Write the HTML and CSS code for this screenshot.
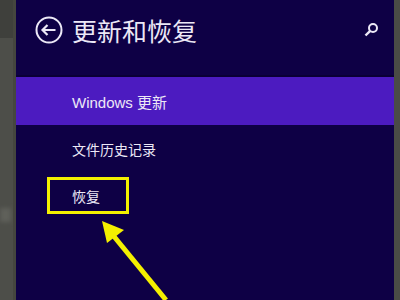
FILE: index.html
```html
<!DOCTYPE html>
<html lang="zh-CN">
<head>
    <meta charset="UTF-8">
    <title>更新和恢复</title>
    <link rel="stylesheet" href="styles.css">
</head>
<body>
    <!-- Franja izquierda (fondo de la ventana de atrás) -->
    <div class="side side-left">
        <div class="side-top"></div>
        <div class="side-ghost"></div>
    </div>

    <!-- Panel de configuración -->
    <div class="panel">
        <div class="panel-header">
            <div class="header-title">
                <svg class="back-icon" width="28" height="28" viewBox="0 0 28 28">
                    <circle cx="14" cy="14" r="12.5" fill="none" stroke="#ece8f6" stroke-width="2"/>
                    <path d="M7.5 14 H20.5 M12.5 9 L7.5 14 L12.5 19" fill="none" stroke="#ece8f6" stroke-width="2.2"/>
                </svg>
                <span class="title">更新和恢复</span>
            </div>
            <svg class="search-icon" width="16" height="16" viewBox="0 0 16 16">
                <circle cx="10" cy="6" r="4" fill="none" stroke="#ece8f6" stroke-width="2"/>
                <path d="M7.2 8.8 L2.5 13.5" stroke="#ece8f6" stroke-width="2.4"/>
            </svg>
        </div>

        <div class="menu">
            <div class="menu-item active">Windows 更新</div>
            <div class="menu-item">文件历史记录</div>
            <div class="menu-item">
                <span class="marked">恢复</span>
            </div>
        </div>

        <!-- Flecha amarilla de anotación -->
        <svg class="arrow" width="400" height="300" viewBox="0 0 400 300">
            <path d="M166 300 L112 234" stroke="#f4f000" stroke-width="5"/>
            <polygon points="102,221 124,230 107,243" fill="#f4f000"/>
        </svg>
    </div>

    <div class="side side-right"></div>
</body>
</html>
```

FILE: styles.css
```css
/* Estilo global */
* {
    box-sizing: border-box;
}

body {
    margin: 0;
    width: 400px;
    height: 300px;
    overflow: hidden;
    display: flex;
    font-family: "Noto Sans CJK SC", "Noto Sans", sans-serif;
    background-color: #4b4c47;
}

/* Franjas laterales */
.side {
    height: 300px;
    background-color: #4d4e49;
    overflow: hidden;
}

.side-left {
    width: 16px;
    border-right: 3px solid #45463f;
    display: flex;
    flex-direction: column;
}

.side-top {
    height: 38px;
    background-color: #3f403c;
}

/* Mancha borrosa del texto de la ventana de atrás */
.side-ghost {
    margin-top: 170px;
    width: 11px;
    height: 14px;
    background-color: #5f605a;
    filter: blur(2px);
}

.side-right {
    width: 6px;
    background-color: #4a4b46;
}

/* Panel principal */
.panel {
    flex: 1;
    position: relative;
    background-color: #0e0045;
    color: #ece8f6;
}

.panel-header {
    height: 77px;
    display: flex;
    justify-content: space-between;
    align-items: flex-start;
    padding: 16px 15px 0 19px;
    border-bottom: 2px solid #0a0035;
}

.header-title {
    display: flex;
    align-items: center;
    gap: 9px;
}

.title {
    font-size: 25px;
    line-height: 28px;
}

.search-icon {
    margin-top: 6px;
}

/* Menú */
.menu {
    display: flex;
    flex-direction: column;
}

.menu-item {
    height: 48px;
    display: flex;
    align-items: center;
    padding-left: 56px;
    font-size: 14px;
}

.menu-item.active {
    background-color: #4c1bc0;
    font-family: "Liberation Sans", "Noto Sans CJK SC", sans-serif;
    font-size: 15px;
}

.marked {
    margin-left: -25px;
    margin-top: -3px;
    width: 82px;
    height: 37px;
    border: 3px solid #f4f000;
    display: flex;
    align-items: center;
    padding-left: 22px;
}

/* Flecha de anotación */
.arrow {
    position: absolute;
    top: 0;
    left: -16px;
}
```
